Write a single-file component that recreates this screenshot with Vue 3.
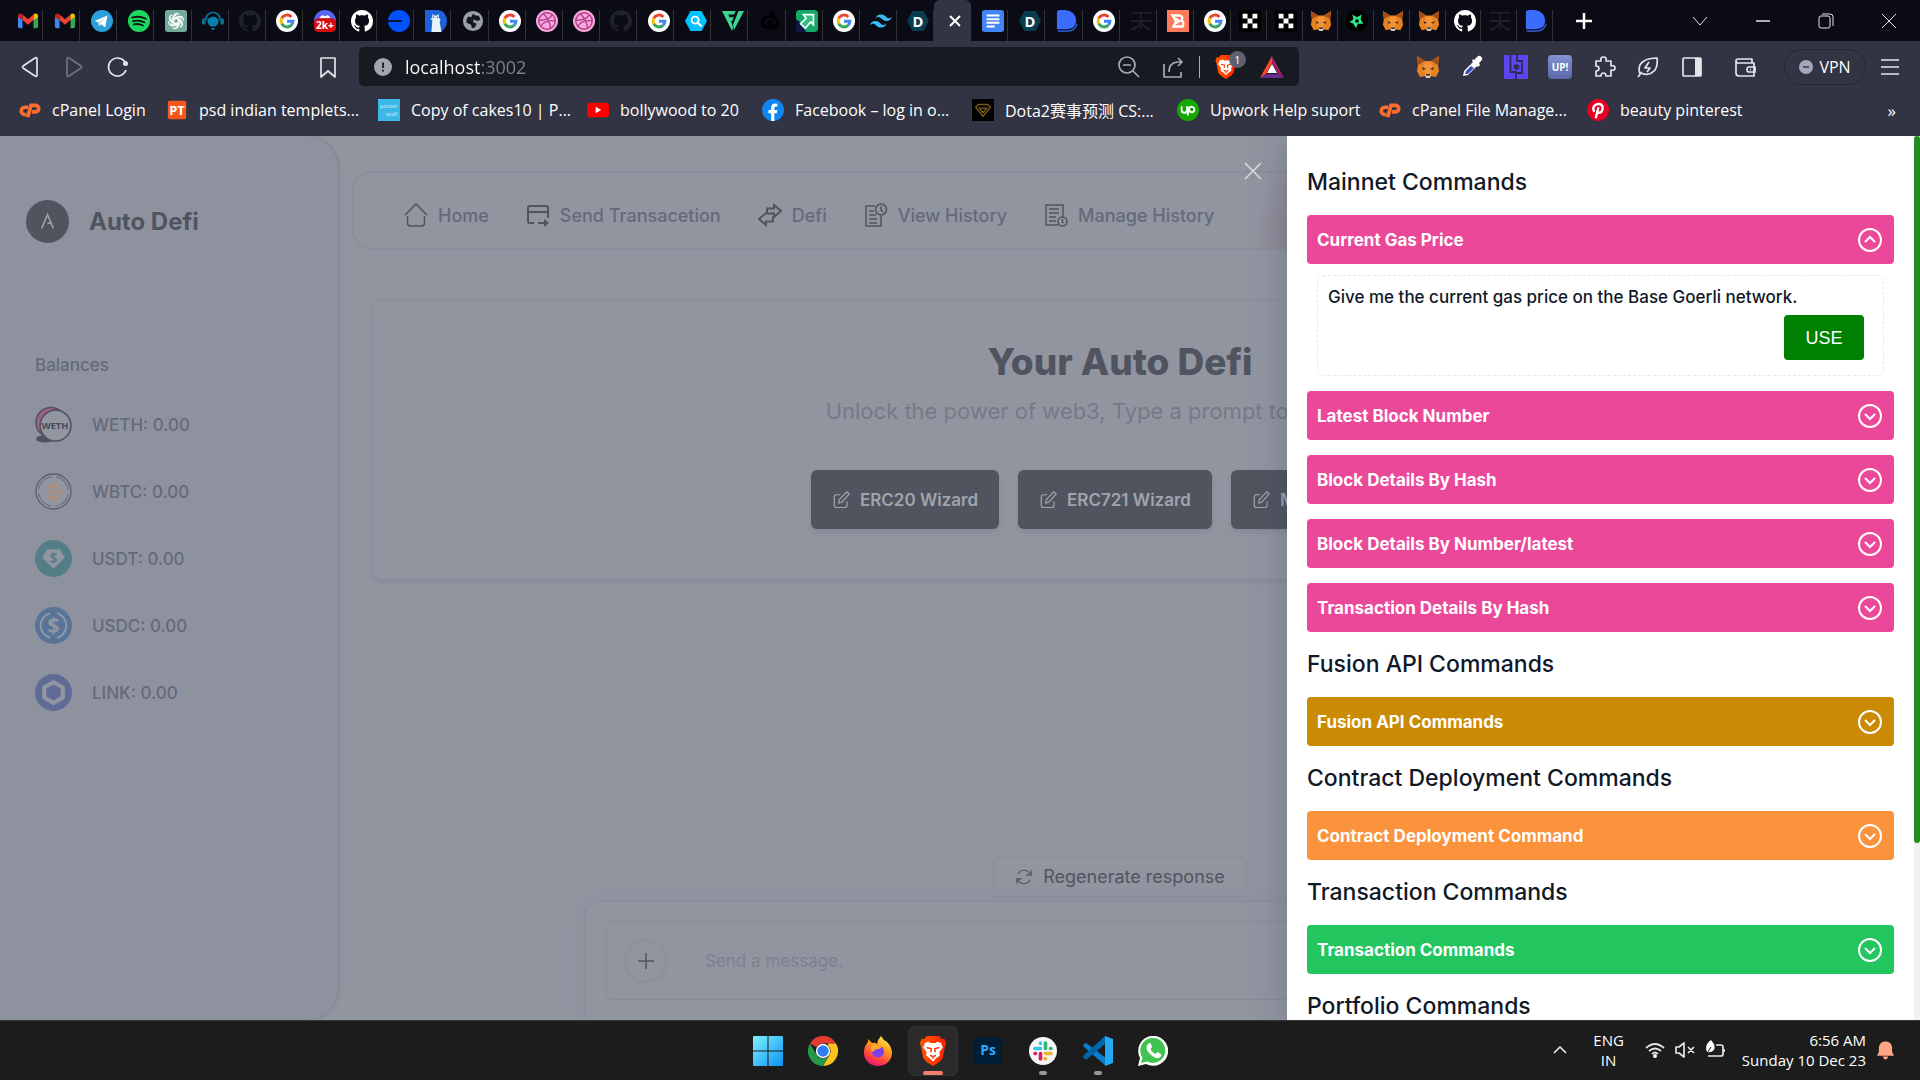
<template>
  <div class="screen">
    <!-- icon sheet, drawn through AppIcon -->
    <svg class="sheet" width="0" height="0" aria-hidden="true">
      <defs>
        <linearGradient id="g-win" x1="0" y1="0" x2="1" y2="1">
          <stop offset="0" stop-color="#80f0ff" />
          <stop offset="1" stop-color="#0a94f5" />
        </linearGradient>
        <linearGradient id="g-fire" x1="0.8" y1="0" x2="0.3" y2="1">
          <stop offset="0" stop-color="#fff44f" />
          <stop offset="0.4" stop-color="#ff9a1f" />
          <stop offset="0.8" stop-color="#ff3647" />
          <stop offset="1" stop-color="#e31587" />
        </linearGradient>
        <linearGradient id="g-brave" x1="0" y1="0" x2="1" y2="0">
          <stop offset="0" stop-color="#ff5601" />
          <stop offset="1" stop-color="#ff2000" />
        </linearGradient>
        <linearGradient id="g-up" x1="0" y1="0" x2="0" y2="1">
          <stop offset="0" stop-color="#8592d0" />
          <stop offset="1" stop-color="#5a68aa" />
        </linearGradient>
      </defs>
      <symbol id="i-gmail" viewBox="0 0 24 24">
        <path d="M1 7v11q0 2 2 2h3V9z" fill="#4285f4" />
        <path d="M23 7v11q0 2-2 2h-3V9z" fill="#34a853" />
        <path d="M6 11V5l6 5 6-5v6l-6 5z" fill="#ea4335" />
        <path d="M1 8V6.500Q1.500 3 5 4l1 1v6z" fill="#c5221f" />
        <path d="M23 8V6.500Q22.500 3 19 4l-1 1v6z" fill="#fbbc04" />
      </symbol>
      <symbol id="i-telegram" viewBox="0 0 24 24">
        <circle cx="12" cy="12" r="12" fill="#2ba0da" />
        <path d="M4 12l14-6-2.500 13-4.500-3.500-2.300 2.200-.500-4z" fill="#fff" />
        <path d="M8.200 13.700L15 8.800l-5 6-1.300 2.900z" fill="#b9d8ea" />
      </symbol>
      <symbol id="i-spotify" viewBox="0 0 24 24">
        <circle cx="12" cy="12" r="12" fill="#1ed760" />
        <path d="M4.500 8.300c5-1.500 10.500-1 15 1.300M5.500 12.200c4.500-1.200 8.500-.8 12.300 1.200M6.300 15.800c3.600-.9 7-.5 10 1.100" fill="none" stroke="#0b1510" stroke-width="2" stroke-linecap="round" />
      </symbol>
      <symbol id="i-openai" viewBox="0 0 24 24">
        <rect width="24" height="24" rx="3" fill="#74aa9c" />
        <g fill="none" stroke="#fff" stroke-width="1.300">
          <path id="petal" d="M9.500 13.500V7a3.300 3.300 0 0 1 6-1.800M9.500 9.500l4.500-2.600 4 2.300" />
          <use href="#petal" transform="rotate(60 12 12)" />
          <use href="#petal" transform="rotate(120 12 12)" />
          <use href="#petal" transform="rotate(180 12 12)" />
          <use href="#petal" transform="rotate(240 12 12)" />
          <use href="#petal" transform="rotate(300 12 12)" />
        </g>
      </symbol>
      <symbol id="i-headset" viewBox="0 0 24 24">
        <path d="M4 11a8 8.500 0 0 1 16 0" fill="none" stroke="#0a6f96" stroke-width="2" />
        <rect x="0" y="9" width="4" height="7" rx="2" fill="#0a6f96" />
        <rect x="20" y="9" width="4" height="7" rx="2" fill="#0a6f96" />
        <path d="M6 10q6-6 12 0v3q-1 4-4 5h-4q-3-1-4-5zM9.500 19.500h5L12 22z" fill="#0a7fab" />
      </symbol>
      <symbol id="i-github" viewBox="0 0 16 16">
        <path fill="currentColor" d="M8 0C3.580 0 0 3.580 0 8c0 3.540 2.290 6.530 5.470 7.590.4.07.55-.17.55-.38 0-.19-.01-.82-.01-1.490-2.010.37-2.530-.49-2.690-.94-.09-.23-.48-.94-.82-1.130-.28-.15-.68-.52-.01-.53.63-.01 1.080.58 1.230.82.72 1.210 1.870.87 2.330.66.07-.52.28-.87.51-1.070-1.780-.2-3.640-.89-3.640-3.950 0-.87.31-1.590.82-2.150-.08-.2-.36-1.020.08-2.120 0 0 .67-.21 2.200.82.64-.18 1.320-.27 2-.27s1.360.09 2 .27c1.530-1.040 2.200-.82 2.200-.82.44 1.100.16 1.920.08 2.120.51.56.82 1.270.82 2.150 0 3.070-1.870 3.750-3.650 3.950.29.25.54.73.54 1.480 0 1.070-.01 1.930-.01 2.200 0 .21.15.46.55.38A8.010 8.010 0 0 0 16 8c0-4.420-3.580-8-8-8z" />
      </symbol>
      <symbol id="i-google" viewBox="0 0 24 24">
        <circle cx="12" cy="12" r="12" fill="#fff" />
        <g fill="none" stroke-width="3.200">
          <path d="M6.300 9A6.500 6.500 0 0 1 16.800 7.600" stroke="#ea4335" />
          <path d="M6.300 15a6.500 6.500 0 0 1 0-6" stroke="#fbbc05" />
          <path d="M16.400 16.800A6.500 6.500 0 0 1 6.300 15" stroke="#34a853" />
          <path d="M12 12.200h6.500a6.500 6.500 0 0 1-2.100 4.600" stroke="#4285f4" />
        </g>
      </symbol>
      <symbol id="i-discord" viewBox="0 0 24 24">
        <circle cx="12" cy="12" r="12" fill="#5865f2" />
        <path d="M6 9q1-3 4-3.500l.5 1h3l.5-1q3 .5 4 3.500z" fill="#fff" />
        <rect y="9" width="24" height="15" rx="5" fill="#d90a0a" />
      </symbol>
      <symbol id="i-base" viewBox="0 0 24 24">
        <circle cx="12" cy="12" r="12" fill="#0052ff" />
        <path d="M0 12h15" stroke="#0b0b15" stroke-width="2" />
      </symbol>
      <symbol id="i-bear" viewBox="0 0 24 24">
        <path d="M0 0h14a10 12 0 0 1 0 24H0z" fill="#1c62d8" />
        <path d="M7 24l1-13-2-1 2-2V4l2 2h3l2-2v4l2 3-1 2 2 11z" fill="#e8f0fb" />
        <path d="M9 8h1M13 8h1" stroke="#1c3d70" stroke-width="1.500" />
      </symbol>
      <symbol id="i-globe" viewBox="0 0 24 24">
        <circle cx="12" cy="12" r="10" fill="#9aa0a6" />
        <path d="M12 4q3 3 6 2 2 3 2 5l-4 1-3-2-1 3 4 2-2 4-3 1q-1-3-1-4l-5-2q-1-4 2-7l3 1z" fill="#15161f" />
        <circle cx="12" cy="12" r="10" fill="none" stroke="#9aa0a6" stroke-width="2" />
      </symbol>
      <symbol id="i-dribbble" viewBox="0 0 24 24">
        <circle cx="12" cy="12" r="12" fill="#f9a8dd" />
        <g fill="none" stroke="#b2408a" stroke-width="1.500">
          <circle cx="12" cy="12" r="9" />
          <path d="M8 4q7 7 8 16M3 11q10 1 15-6M5 18q5-8 16-6" />
        </g>
      </symbol>
      <symbol id="i-hexsearch" viewBox="0 0 24 24">
        <path d="M6 1h12l6 11-6 11H6L0 12z" fill="#00c2ff" />
        <circle cx="11" cy="11" r="3.800" fill="none" stroke="#fff" stroke-width="2" />
        <path d="M14 14l4 4" stroke="#fff" stroke-width="2.200" />
      </symbol>
      <symbol id="i-flogo" viewBox="0 0 24 24">
        <path d="M0 1h15l-2 4H7l1 3h5l-2 4h-1l2 7-1 4zM18 1h6L13 22l-1-6z" fill="#3fd493" />
      </symbol>
      <symbol id="i-swirl" viewBox="0 0 24 24">
        <path d="M12 3q4 0 4 4M5 17a8 7 0 1 1 14 0q-7 5-14 0z" fill="none" stroke="#000" stroke-width="3.500" />
        <circle cx="12" cy="14" r="3" fill="#000" />
      </symbol>
      <symbol id="i-arrow" viewBox="0 0 24 24">
        <rect width="24" height="24" rx="4" fill="#16a866" />
        <path d="M0 10q8 4 11 14H4q-4 0-4-4z" fill="#10164a" />
        <path d="M8 5h11v11l-3-3-6 7-5-5 6-6z" fill="#2ec27e" stroke="#fff" stroke-width="1.800" />
      </symbol>
      <symbol id="i-tailwind" viewBox="0 0 24 24">
        <path fill="#38bdf8" d="M12 4.800c-3.200 0-5.200 1.600-6 4.800 1.200-1.600 2.600-2.200 4.200-1.800.9.200 1.600.9 2.300 1.600C13.700 10.600 15 12 18 12c3.200 0 5.200-1.600 6-4.800-1.200 1.600-2.600 2.200-4.200 1.800-.9-.2-1.600-.9-2.300-1.600C16.300 6.200 15 4.800 12 4.800zM6 12c-3.200 0-5.200 1.600-6 4.800 1.200-1.600 2.600-2.200 4.200-1.800.9.200 1.600.9 2.300 1.600 1.200 1.200 2.500 2.600 5.500 2.600 3.200 0 5.200-1.600 6-4.800-1.200 1.600-2.600 2.200-4.200 1.800-.9-.2-1.600-.9-2.300-1.600C10.300 13.400 9 12 6 12z" />
      </symbol>
      <symbol id="i-dhex" viewBox="0 0 24 24">
        <path d="M6 1h12l6 11-6 11H6L0 12z" fill="#063d50" />
      </symbol>
      <symbol id="i-docs" viewBox="0 0 24 24">
        <rect width="24" height="24" rx="3" fill="#4285f4" />
        <path d="M5 6h14M5 10h14M5 14h14M5 18h9" stroke="#fff" stroke-width="2.200" />
      </symbol>
      <symbol id="i-bluedee" viewBox="0 0 24 24">
        <path d="M1 3q0-3 3-3h6q11 1 12 11 0 10-10 10H1z" fill="#3a6cff" />
        <path d="M2 23h10q9 0 11-8" fill="none" stroke="#3a6cff" stroke-width="1.200" />
      </symbol>
      <symbol id="i-wang" viewBox="0 0 24 24">
        <path d="M1 3h22M1 12h22M12 3v18M3 20q8-1 9-8M21 20q-8-1-9-8M1 21h5M18 21h5" fill="none" stroke="#1d1e26" stroke-width="2" />
      </symbol>
      <symbol id="i-orangeb" viewBox="0 0 24 24">
        <rect width="24" height="24" fill="#ff7a5c" />
        <path d="M6 6h8q4 1 2 5 3 3 1 7H7l3-6z" fill="none" stroke="#fff" stroke-width="2.500" />
        <path d="M9 9l5 3-5 3" fill="none" stroke="#fff" stroke-width="2" />
      </symbol>
      <symbol id="i-okx" viewBox="0 0 24 24">
        <rect width="24" height="24" rx="4" fill="#000" />
        <path d="M4 4h5.300v5.300H4zM14.700 4H20v5.300h-5.300zM9.300 9.300h5.400v5.400H9.300zM4 14.700h5.300V20H4zM14.700 14.700H20V20h-5.300z" fill="#fff" />
      </symbol>
      <symbol id="i-fox" viewBox="0 0 24 24">
        <path d="M1 1l8 5h6l8-5-1 9 1 6-3 6-5-1-2 2h-2l-2-2-5 1-3-6 1-6z" fill="#e8821e" />
        <path d="M1 1l8 5-7 4zM23 1l-8 5 7 4z" fill="#a3501c" />
        <path d="M9 7h6l2 7-3 5h-4l-3-5z" fill="#f5933a" />
        <path d="M6 12l4 2-3 1zM18 12l-4 2 3 1z" fill="#3b2a20" />
        <path d="M9 20l1-1h4l1 1-1 3h-4z" fill="#d8c8b8" />
        <path d="M10 19h4v1.500h-4z" fill="#2a2220" />
      </symbol>
      <symbol id="i-spin" viewBox="0 0 24 24">
        <circle cx="12" cy="12" r="12" fill="#000" />
        <path d="M7 5l5 3 5-3-1 5 3 5-6 0-2 5-3-5-4-2 4-3z" fill="#2fe38a" />
        <circle cx="12" cy="12" r="2" fill="#000" />
      </symbol>
      <symbol id="i-brave" viewBox="0 0 24 26">
        <path d="M6.500 0h11l2 2.500 2.500 0 1.500 4-1 2-2 10.500-3 3.500L12 26l-5.500-3.500-3-3.500-2-10.500-1-2L2 2.500h2.500z" fill="url(#g-brave)" />
        <path d="M5 6l3-1 2 1h4l2-1 3 1 1.500 4-3 4 .5 3-3 2-3 3-3-3-3-2 .5-3-3-4z" fill="#fff" />
        <path d="M6.500 10l4 1-.5 3M17.500 10l-4 1 .5 3M9.500 16.500l2.500 1.500 2.500-1.500M12 18v2" fill="none" stroke="#ff3a00" stroke-width="1.300" />
      </symbol>
      <symbol id="i-cpanel" viewBox="0 0 24 24">
        <g fill="none" stroke="#ff6c2c" stroke-width="4">
          <path d="M10 9H6.500a3.500 3.500 0 0 0 0 8H8" />
          <path d="M9.500 20l3.500-13h5a3.500 3.500 0 0 1 0 7h-4" />
        </g>
      </symbol>
      <symbol id="i-pt" viewBox="0 0 24 24">
        <rect x="2" y="2" width="20" height="20" rx="2" fill="#f6571c" />
      </symbol>
      <symbol id="i-cakes" viewBox="0 0 24 24">
        <rect width="24" height="24" fill="#3cb8e6" />
      </symbol>
      <symbol id="i-youtube" viewBox="0 0 24 24">
        <rect y="4" width="24" height="16" rx="4" fill="#f00" />
        <path d="M9.500 8.500l6 3.500-6 3.500z" fill="#fff" />
      </symbol>
      <symbol id="i-facebook" viewBox="0 0 24 24">
        <circle cx="12" cy="12" r="12" fill="#1086f3" />
        <path d="M10 24v-8.500H7V12h3V9.500Q10 5 14.500 5l2.300.2v3h-1.500q-1.800 0-1.800 1.800v2h3.300l-.6 3.500h-2.700V24z" fill="#fff" />
      </symbol>
      <symbol id="i-dota" viewBox="0 0 24 24">
        <rect width="24" height="24" fill="#000" />
        <path d="M7 6h10l3 3-8 10L4 9zM8 10h8l-4 5z" fill="none" stroke="#7a5d1a" stroke-width="1.500" />
      </symbol>
      <symbol id="i-upwork" viewBox="0 0 24 24">
        <circle cx="12" cy="12" r="12" fill="#14a800" />
        <path d="M5 8v4a3 3 0 0 0 6 0V8q2 6 5 6.500a3 3 0 1 0-3-3.500L11.500 18" fill="none" stroke="#fff" stroke-width="2" />
      </symbol>
      <symbol id="i-pinterest" viewBox="0 0 24 24">
        <circle cx="12" cy="12" r="12" fill="#e60023" />
        <path d="M8 14q-2-3-.5-6 2-3 6-2.500 4 .8 3.500 5-.8 5-4 4.500-1.500-.3-1.500-1.500M12.500 9L9.500 21" fill="none" stroke="#fff" stroke-width="2.600" />
      </symbol>
      <symbol id="i-picker" viewBox="0 0 24 24">
        <path d="M3 21l1-5L14 6l4 4L8 20z" fill="#fff" />
        <path d="M5 19l1-3 5-5 3 2-6 6z" fill="#3450b8" />
        <path d="M12 6l6 6 2-2-1-2 3-3q1-2-1-3.500T17 2l-3 3-1-1z" fill="#fff" />
      </symbol>
      <symbol id="i-blocks" viewBox="0 0 24 24">
        <path d="M0 0h24v24H0z" fill="#5b46f2" />
        <path d="M6.500 0v17H12v7M13 0v6h5v12h-5" fill="none" stroke="#2b2d55" stroke-width="1.800" />
        <circle cx="12.500" cy="12" r="2.800" fill="#2b2d55" />
      </symbol>
      <symbol id="i-up" viewBox="0 0 24 24">
        <rect width="24" height="24" rx="4" fill="url(#g-up)" />
      </symbol>
      <symbol id="i-puzzle" viewBox="0 0 24 24">
        <path d="M4 6h5q-1-4 2.500-4T14 6h5v5q4-1 4 2t-4 2v6h-5q0-3-2.500-3T9 21H4v-5q3 0 3-2.500T4 11z" class="line" />
      </symbol>
      <symbol id="i-leaf" viewBox="0 0 24 24">
        <path d="M4 19q-3-9 4-13 5-3 13-3 1 9-3 13-5 5-12 2.500M2 22l4-5M13 7l-4 6h5l-3 4" class="line" />
      </symbol>
      <symbol id="i-panel" viewBox="0 0 24 24">
        <rect x="3" y="3" width="18" height="18" rx="1" class="line" />
        <path d="M15 3h6v18h-6z" fill="#e4e5ea" />
      </symbol>
      <symbol id="i-wallet" viewBox="0 0 24 24">
        <path d="M3 6v12q0 3 3 3h15V8H5Q3 8 3 6t2-2h14v4M22 12h-6q-2 0-2 2.500t2 2.500h6zM17 14.500h1" class="line" />
      </symbol>
      <symbol id="i-weth" viewBox="0 0 36 36">
        <ellipse cx="10" cy="32" rx="9" ry="3.500" fill="#50535f" />
        <circle cx="15.500" cy="16" r="14.500" fill="#a25f8c" stroke="#50535f" stroke-width="1.500" />
        <circle cx="20" cy="19" r="15" fill="#9296a1" stroke="#50535f" stroke-width="1.500" />
      </symbol>
      <symbol id="i-wbtc" viewBox="0 0 36 36">
        <circle cx="18" cy="18" r="17" fill="#9296a1" stroke="#5d5b72" stroke-width="1.300" />
        <circle cx="18" cy="18" r="14.500" fill="none" stroke="#6d6c80" stroke-width="1" stroke-dasharray="19 3.770" stroke-dashoffset="-1.900" />
        <path d="M12 13h8q3.500 0 3.500 2.500T20 18h-4.500M20 18q4.500 0 4.500 2.800T20 23.600h-8M15.500 13v10.600M16.500 9v4M20.500 9v4M16.500 23.600v4M20.500 23.600v4" fill="none" stroke="#b08f7d" stroke-width="1.900" />
      </symbol>
      <symbol id="i-usdt" viewBox="0 0 36 36">
        <circle cx="18" cy="18" r="18" fill="#537e86" />
        <path d="M12 9h12l5 8-11 11L7 17z" fill="#9296a1" />
      </symbol>
      <symbol id="i-usdc" viewBox="0 0 36 36">
        <circle cx="18" cy="18" r="18" fill="#587499" />
        <path d="M14.500 6a12.500 12.500 0 0 0 0 24M21.500 6a12.500 12.500 0 0 1 0 24" fill="none" stroke="#9296a1" stroke-width="2" />
      </symbol>
      <symbol id="i-link" viewBox="0 0 36 36">
        <circle cx="18" cy="18" r="18" fill="#5f6b97" />
        <path d="M18 8l9 5v10l-9 5-9-5V13z" fill="none" stroke="#9296a1" stroke-width="4" />
      </symbol>
      <symbol id="i-home" viewBox="0 0 24 24">
        <path d="M1 12L12 1l11 11M3.500 13v7q0 3 3 3h11q3 0 3-3v-7" class="mono" />
      </symbol>
      <symbol id="i-send" viewBox="0 0 24 24">
        <path d="M8 20H4q-2 0-2-2V5q0-2 2-2h16q2 0 2 2v10M2 9h20M12 20h8" class="mono bold" />
        <path d="M18 16l5 4-5 4z" fill="#50545f" />
      </symbol>
      <symbol id="i-swap" viewBox="0 0 24 24">
        <path d="M16 2l7 6-7 6v-3.500H9v-5h7zM8 10l-7 6 7 6v-3.500h7v-5" class="mono bold" />
      </symbol>
      <symbol id="i-view" viewBox="0 0 24 24">
        <path d="M11 3H2v20h15V13M5 8h5M5 12h7M5 16h8M5 20h8" class="mono" />
        <circle cx="17" cy="6.500" r="5.500" class="mono" />
        <path d="M17 3v4l2 2" class="mono" />
      </symbol>
      <symbol id="i-manage" viewBox="0 0 24 24">
        <path d="M14 22H2V2h17v12M5 6h10M5 10h10M5 14h7M5 18h7" class="mono" />
        <circle cx="18.500" cy="18.500" r="4.500" class="mono" />
        <path d="M18.500 16v3l1 1" class="mono" />
      </symbol>
      <symbol id="i-edit" viewBox="0 0 24 24">
        <path d="M11 5H6q-3 0-3 3v11q0 3 3 3h11q3 0 3-3v-5M9 16l1-5L20 1l3 3-10 11z" fill="none" stroke="#a0a4ae" stroke-width="1.600" />
      </symbol>
      <symbol id="i-refresh" viewBox="0 0 24 24">
        <path d="M4 8q3-5 8-5 6 0 9 6M21.500 3v6.500H15M20 16q-3 5-8 5-6 0-9-6M2.500 21v-6.500H9" class="mono" />
      </symbol>
      <symbol id="i-windows" viewBox="0 0 30 30">
        <path d="M0 1q0-1 1-1h13.500v14.500H0zM15.500 0H29q1 0 1 1v13.500H15.500zM0 15.500h14.500V30H1q-1 0-1-1zM15.500 15.500H30V29q0 1-1 1H15.500z" fill="url(#g-win)" />
      </symbol>
      <symbol id="i-chrome" viewBox="0 0 30 30">
        <path d="M2 7.500a15 15 0 0 1 26 0H15a7.500 7.500 0 0 0-6.500 3.800z" fill="#e33b2e" />
        <path d="M28 7.500A15 15 0 0 1 15 30l6.500-11.300A7.500 7.500 0 0 0 20 9.500V7.500z" fill="#fcc31e" />
        <path d="M2 7.500A15 15 0 0 0 15 30l6.500-11.300a7.500 7.500 0 0 1-13 0z" fill="#249a49" />
        <circle cx="15" cy="15" r="7.200" fill="#fff" />
        <circle cx="15" cy="15" r="5.700" fill="#2f7df0" />
      </symbol>
      <symbol id="i-firefox" viewBox="0 0 30 30">
        <path d="M18 0q2 4 6 6 5 5 5 11a14 13 0 0 1-28 0Q1 10 5 6V3l4 4q3-1 5 1 1-5 4-8z" fill="url(#g-fire)" />
        <circle cx="15" cy="15.500" r="6" fill="#7a3ff0" />
        <path d="M8 9q3-2 6 0l5 1q-1 3-4 3t-5 3q-3-1-2-7z" fill="#ffa52a" />
      </symbol>
      <symbol id="i-ps" viewBox="0 0 30 30">
        <rect x="1" y="1" width="28" height="27" rx="5" fill="#001e36" />
      </symbol>
      <symbol id="i-slack" viewBox="0 0 30 30">
        <circle cx="15" cy="15" r="14" fill="#f7f7f7" />
        <g fill="none" stroke-width="3.600" stroke-linecap="round">
          <path d="M7 12.500h5.500M12.500 7v.5" stroke="#36c5f0" />
          <path d="M17.500 7v5.500M22.500 12.500h.5" stroke="#2eb67d" />
          <path d="M17.500 17.500H23M17.500 22.500v.5" stroke="#ecb22e" />
          <path d="M12.500 17.500V23M7 17.500h.5" stroke="#e01e5a" />
        </g>
      </symbol>
      <symbol id="i-code" viewBox="0 0 30 30">
        <path d="M0 9l3-2 20 15v8L1 11z" fill="#0a7fd0" />
        <path d="M0 21l3 3L22 8V0L1 19z" fill="#0065a9" />
        <path d="M22 0l8 3v24l-8 3z" fill="#24a9f2" />
      </symbol>
      <symbol id="i-whatsapp" viewBox="0 0 30 30">
        <path d="M0 30l2-8A15 15 0 1 1 8 28z" fill="#fff" />
        <path d="M3 27l1.500-5.500A12.500 12.500 0 1 1 9 25.500z" fill="#40c351" />
        <path d="M10 8q2-2 3 0l1 3-1.500 2q1 3 5 5l2-2 3.500 2q1 2-2 4-4 1-9-4-6-6-2-10z" fill="#fff" />
      </symbol>
    </svg>

    <header class="browser">
      <div class="tabstrip">
        <div class="tabs">
          <button v-for="(tab, i) in tabs" :key="i" class="tab" :class="{ active: tab === 'close', dim: tab === 'dim' }" :aria-label="tab">
            <svg v-if="tab === 'close'" viewBox="0 0 22 22"><path d="M6 6l10 10M16 6L6 16" stroke="#fff" stroke-width="2" /></svg>
            <AppIcon v-else :name="tab === 'dim' ? 'github' : tab" />
          </button>
        </div>
        <div class="window-controls">
          <button aria-label="New tab"><svg viewBox="0 0 24 24"><path d="M12 4v16M4 12h16" stroke="#fff" stroke-width="2.500" /></svg></button>
          <button aria-label="Search tabs"><svg viewBox="0 0 24 24"><path d="M5 8l7 8 7-8" /></svg></button>
          <button aria-label="Minimize"><svg viewBox="0 0 24 24"><path d="M5 12h14" stroke-width="1.500" /></svg></button>
          <button aria-label="Restore"><svg viewBox="0 0 24 24"><rect x="5" y="7" width="11" height="12" rx="2" /><path d="M8 5h8q3 0 3 3v9" /></svg></button>
          <button aria-label="Close window"><svg viewBox="0 0 24 24"><path d="M5 5l14 14M19 5L5 19" /></svg></button>
        </div>
      </div>

      <div class="toolbar">
        <div class="nav-buttons">
          <button aria-label="Back"><svg viewBox="0 0 24 24"><path d="M19 4v16q0 2-2 1L5 13q-1-1 0-2L17 3q2-1 2 1z" class="line" /></svg></button>
          <button class="faded" aria-label="Forward"><svg viewBox="0 0 24 24"><path d="M5 4v16q0 2 2 1l12-8q1-1 0-2L7 3Q5 2 5 4z" class="line" /></svg></button>
          <button aria-label="Reload"><svg viewBox="0 0 24 24"><path d="M20 15a9 9 0 1 1-1-8" class="line" /><circle cx="19.500" cy="8.500" r="2.500" fill="#e4e5ea" /></svg></button>
        </div>
        <button class="save" aria-label="Bookmark this page"><svg viewBox="0 0 24 24"><path d="M5 3h14v19l-7-6-7 6z" class="line" /></svg></button>
        <div class="address">
          <svg viewBox="0 0 20 20"><circle cx="10" cy="10" r="10" fill="#a2a4ae" /><path d="M10 5v6M10 13v2" stroke="#181a21" stroke-width="2" /></svg>
          <input v-model="url" type="text" aria-label="Address" />
          <button aria-label="Zoom"><svg viewBox="0 0 24 24"><g class="line soft"><circle cx="10" cy="10" r="8" /><path d="M6 10h8M16 16l6 6" /></g></svg></button>
          <button aria-label="Share"><svg viewBox="0 0 24 24"><path d="M3 9v13h17v-5M8 17q0-9 8-10h5M17 3l4 4-4 4" class="line soft" /></svg></button>
          <span class="divider"></span>
          <button class="shield" aria-label="Brave Shields"><AppIcon name="brave" /><span class="count">1</span></button>
          <button aria-label="Rewards">
            <svg viewBox="0 0 24 24"><path d="M12 1L0 23l6-4 6-11z" fill="#ff4724" /><path d="M12 1l12 22-6-4-6-11z" fill="#9e1f63" /><path d="M0 23h24l-6-4H6z" fill="#662d91" /><path d="M12 9l5 9H7z" fill="#fff" /></svg>
          </button>
        </div>
        <div class="extensions">
          <button v-for="name in extensions" :key="name" :aria-label="name"><AppIcon :name="name" /></button>
        </div>
        <button class="wallet" aria-label="Wallet"><AppIcon name="wallet" /></button>
        <button class="vpn">
          <svg viewBox="0 0 14 14"><circle cx="7" cy="7" r="7" fill="#a4a6bb" /><path d="M4 7h6" stroke="#323443" stroke-width="1.500" /></svg>VPN
        </button>
        <button class="menu" aria-label="Menu"><svg viewBox="0 0 24 24"><path d="M3 5h18M3 12h18M3 19h18" class="line" /></svg></button>
      </div>

      <nav class="bookmarks">
        <a v-for="b in bookmarks" :key="b.text" href="#"><AppIcon :name="b.icon" />{{ b.text }}</a>
        <button class="more" aria-label="More bookmarks">»</button>
      </nav>
    </header>

    <div class="page">
      <aside class="sidebar">
        <div class="brand">
          <svg viewBox="0 0 44 44"><circle cx="22" cy="22" r="22" fill="#50545f" /><path d="M16 29l6-14 6 14M22 24l4-1" fill="none" stroke="#a0a4ae" stroke-width="1.500" /></svg>
          <h1>Auto Defi</h1>
        </div>
        <h2>Balances</h2>
        <ul>
          <li v-for="t in tokens" :key="t"><AppIcon :name="t.toLowerCase()" />{{ t }}: 0.00</li>
        </ul>
      </aside>

      <main class="content">
        <nav class="topnav">
          <a v-for="l in links" :key="l.text" href="#"><AppIcon :name="l.icon" />{{ l.text }}</a>
        </nav>

        <section class="hero">
          <h2>Your Auto Defi</h2>
          <p>Unlock the power of web3, Type a prompt to get started!</p>
          <div class="wizards">
            <button v-for="w in wizards" :key="w"><AppIcon name="edit" />{{ w }}</button>
          </div>
        </section>

        <button class="regenerate"><AppIcon name="refresh" />Regenerate response</button>
        <form class="composer" @submit.prevent>
          <div class="composer-box">
            <button type="button" aria-label="Add"><svg viewBox="0 0 16 16"><path d="M8 0v16M0 8h16" stroke="#50545f" stroke-width="1.500" /></svg></button>
            <input v-model="message" type="text" placeholder="Send a message." aria-label="Message" />
          </div>
        </form>
      </main>

      <button class="close-drawer" aria-label="Close drawer"><svg viewBox="0 0 18 18"><path d="M1 1l16 16M17 1L1 17" stroke="#dcdee3" stroke-width="1.500" /></svg></button>
      <aside class="drawer">
        <section v-for="g in groups" :key="g.title">
          <h3>{{ g.title }}</h3>
          <template v-for="c in g.commands" :key="c.name">
            <button class="bar" :class="g.color" @click="toggle(c.name)">
              {{ c.name }}
              <svg viewBox="0 0 24 24">
                <circle cx="12" cy="12" r="11" />
                <path :d="open === c.name ? 'M7 14l5-5 5 5' : 'M7 10l5 5 5-5'" />
              </svg>
            </button>
            <div v-if="open === c.name" class="prompt">
              <p>{{ c.prompt }}</p>
              <button @click="message = c.prompt">USE</button>
            </div>
          </template>
        </section>
        <div class="scroll"><div class="thumb"></div></div>
      </aside>
    </div>

    <footer class="taskbar">
      <div class="apps">
        <button v-for="a in apps" :key="a" :class="['app', a]" :aria-label="a"><AppIcon :name="a" /></button>
      </div>
      <div class="tray">
        <button aria-label="Hidden icons"><svg viewBox="0 0 16 16"><path d="M2 11l6-6 6 6" class="line" /></svg></button>
        <div class="lang">ENG<br />IN</div>
        <div class="status">
          <svg viewBox="0 0 20 20"><g class="line"><path d="M1 8q9-8 18 0M4 11q6-5 12 0M7 14q3-3 6 0" /></g><circle cx="10" cy="16" r="2" fill="#fff" /></svg>
          <svg viewBox="0 0 20 20"><path d="M1 7h3l5-4v14l-5-4H1zM13 7l6 6M19 7l-6 6" class="line" /></svg>
          <svg viewBox="0 0 20 20"><path d="M11 5h5q2 0 2 2v7q0 2-2 2H3M19 9v3" class="line" /><path d="M6 0q5 5 3 10-3 3-7 2Q-1 5 6 0z" fill="#fff" /><path d="M1 15l5-8" stroke="#1c1c1c" /></svg>
        </div>
        <div class="clock">6:56 AM<br />Sunday 10 Dec 23</div>
        <svg class="bell" viewBox="0 0 18 20"><path d="M0 16l2-4V7q1-6 7-6t7 6v5l2 4zM6 17h6q-1 3-3 3t-3-3z" fill="#ffa582" /></svg>
      </div>
    </footer>
  </div>
</template>

<script setup>
import { h, ref } from "vue";

const url = ref("localhost:3002");
const message = ref("");
const open = ref("Current Gas Price");

// lettering that sits on top of some icons, in a 24x24 box
const lettering = {
  discord: [{ text: "2k+", x: 12, y: 21, size: 11, fill: "#fff" }],
  dhex: [{ text: "D", x: 12, y: 18, size: 16, fill: "#fff" }],
  pt: [{ text: "PT", x: 12, y: 17, size: 14, fill: "#fff" }],
  cakes: [
    { text: "poster", x: 12, y: 10, size: 6, fill: "#a4def5" },
    { text: "wall", x: 15, y: 18, size: 6, fill: "#a4def5" },
  ],
  up: [{ text: "UP!", x: 12, y: 16, size: 10, fill: "#fff" }],
  weth: [{ text: "WETH", x: 13, y: 15, size: 6, fill: "#454853" }],
  usdt: [{ text: "$", x: 12, y: 15, size: 9, fill: "#537e86" }],
  usdc: [{ text: "$", x: 12, y: 17, size: 14, fill: "#9296a1" }],
  ps: [{ text: "Ps", x: 12, y: 15, size: 11, fill: "#31a8ff" }],
};

const AppIcon = (props) =>
  h("svg", { viewBox: "0 0 24 24", "aria-hidden": "true" }, [
    h("use", { href: "#i-" + props.name }),
    ...(lettering[props.name] || []).map((l) =>
      h(
        "text",
        { x: l.x, y: l.y, fill: l.fill, "font-size": l.size, "font-family": "Open Sans", "font-weight": 700, "text-anchor": "middle" },
        l.text
      )
    ),
  ]);
AppIcon.props = ["name"];

// "close" is the active tab, "dim" is a github tab with the dark favicon
const tabs = [
  "gmail", "gmail", "telegram", "spotify", "openai", "headset", "dim", "google", "discord", "github", "base",
  "bear", "globe", "google", "dribbble", "dribbble", "dim", "google", "hexsearch", "flogo", "swirl", "arrow",
  "google", "tailwind", "dhex", "close", "docs", "dhex", "bluedee", "google", "wang", "orangeb", "google",
  "okx", "okx", "fox", "spin", "fox", "fox", "github", "wang", "bluedee",
];

const extensions = ["fox", "picker", "blocks", "up", "puzzle", "leaf", "panel"];

const bookmarks = [
  { icon: "cpanel", text: "cPanel Login" },
  { icon: "pt", text: "psd indian templets..." },
  { icon: "cakes", text: "Copy of cakes10 | P..." },
  { icon: "youtube", text: "bollywood to 20" },
  { icon: "facebook", text: "Facebook – log in o..." },
  { icon: "dota", text: "Dota2赛事预测 CS:..." },
  { icon: "upwork", text: "Upwork Help suport" },
  { icon: "cpanel", text: "cPanel File Manage..." },
  { icon: "pinterest", text: "beauty pinterest" },
];

const tokens = ["WETH", "WBTC", "USDT", "USDC", "LINK"];

const links = [
  { icon: "home", text: "Home" },
  { icon: "send", text: "Send Transacetion" },
  { icon: "swap", text: "Defi" },
  { icon: "view", text: "View History" },
  { icon: "manage", text: "Manage History" },
];

const wizards = ["ERC20 Wizard", "ERC721 Wizard", "Multisig Wizard"];

const groups = [
  {
    title: "Mainnet Commands",
    color: "pink",
    commands: [
      { name: "Current Gas Price", prompt: "Give me the current gas price on the Base Goerli network." },
      { name: "Latest Block Number", prompt: "Give me the latest block number." },
      { name: "Block Details By Hash", prompt: "Give me the block details by hash." },
      { name: "Block Details By Number/latest", prompt: "Give me the details of the latest block." },
      { name: "Transaction Details By Hash", prompt: "Give me the transaction details by hash." },
    ],
  },
  { title: "Fusion API Commands", color: "gold", commands: [{ name: "Fusion API Commands", prompt: "" }] },
  { title: "Contract Deployment Commands", color: "orange", commands: [{ name: "Contract Deployment Command", prompt: "" }] },
  { title: "Transaction Commands", color: "green", commands: [{ name: "Transaction Commands", prompt: "" }] },
  { title: "Portfolio Commands", color: "pink", commands: [] },
];

const apps = ["windows", "chrome", "firefox", "brave", "ps", "slack", "code", "whatsapp"];

function toggle(name) {
  open.value = open.value === name ? "" : name;
}
</script>

<style>
body {
  background: #9195a0;
}
</style>

<style scoped>
* {
  box-sizing: border-box;
}
.screen {
  display: flex;
  flex-direction: column;
  height: 100vh;
  overflow: hidden;
  font-family: "Inter", "Liberation Sans", sans-serif;
}
.sheet {
  position: absolute;
}
h1,
h2,
h3,
p,
ul {
  margin: 0;
  padding: 0;
}
a {
  color: inherit;
  text-decoration: none;
}
button,
input {
  border: 0;
  padding: 0;
  background: none;
  color: inherit;
  font: inherit;
}
button {
  cursor: pointer;
}
svg {
  display: block;
  flex: none;
}
.line {
  fill: none;
  stroke: #e4e5ea;
  stroke-width: 1.700;
  stroke-linejoin: round;
}
.soft {
  stroke: #a9abb3;
}
.mono {
  fill: none;
  stroke: #50545f;
  stroke-width: 1.500;
}
.bold {
  stroke-width: 2;
}

/* browser chrome */
.browser {
  flex: none;
  height: 136px;
  background: #323443;
  color: #fff;
  font-family: "Open Sans", "Noto Sans CJK SC", sans-serif;
}
.tabstrip {
  display: flex;
  height: 41px;
  padding-left: 6px;
  background: #0b0b15;
}
.tabs {
  flex: 1;
  display: grid;
  grid-template-columns: repeat(33, 83fr) repeat(9, 80fr);
}
.tab {
  display: flex;
  align-items: center;
  justify-content: center;
  min-width: 0;
  padding-left: 6px;
  background: linear-gradient(#333, #333) right bottom / 1px 31px no-repeat;
}
.tab:nth-child(n + 34) {
  padding-left: 2px;
}
.tab svg {
  width: 22px;
  height: 22px;
}
.tab.dim {
  color: #1f2229;
}
.tab.active {
  padding: 0 0 0 4px;
  background: #323443;
  border-radius: 6px 6px 0 0;
}
.window-controls {
  display: grid;
  grid-template-columns: 115px 63px 63px 63px 63px;
  width: 367px;
}
.window-controls button {
  display: grid;
  place-items: center;
}
.window-controls button:first-child {
  padding-right: 53px;
}
.window-controls svg {
  width: 24px;
  height: 24px;
  fill: none;
  stroke: #e4e5ea;
}
.toolbar {
  display: flex;
  align-items: center;
  height: 51px;
  padding: 0 18px;
}
.toolbar svg {
  width: 24px;
  height: 24px;
}
.nav-buttons {
  flex: 1;
  display: flex;
  gap: 20px;
}
.faded {
  opacity: 0.35;
}
.save {
  margin-right: 19px;
}
.address {
  display: flex;
  align-items: center;
  gap: 20px;
  width: 940px;
  height: 39px;
  padding: 0 15px;
  background: #181a21;
  border-radius: 5px;
}
.address > svg {
  width: 18px;
  height: 18px;
}
.address input {
  flex: 1;
  margin-left: -7px;
  font-size: 18px;
  background: linear-gradient(90deg, #fff 76px, #80838c 76px);
  background-clip: text;
  color: transparent;
}
.divider {
  width: 1px;
  height: 22px;
  margin: 0 -6px;
  background: #a9abb3;
}
.shield {
  position: relative;
  margin-right: 2px;
}
.count {
  position: absolute;
  top: -4px;
  left: 15px;
  width: 17px;
  height: 17px;
  border-radius: 50%;
  background: #5d6070;
  font-size: 11px;
  line-height: 17px;
}
.extensions {
  display: flex;
  gap: 20px;
  margin-left: 117px;
}
.wallet {
  margin-left: 29px;
}
.vpn {
  display: flex;
  align-items: center;
  justify-content: center;
  gap: 6px;
  width: 82px;
  height: 36px;
  margin-left: 27px;
  border: 1px solid #242630;
  border-radius: 18px;
  font-size: 16px;
}
.vpn svg {
  width: 14px;
  height: 14px;
}
.menu {
  margin-left: 12px;
}
.bookmarks {
  display: grid;
  grid-template-columns: 147px 212px 209px 175px 210px 205px 202px 208px 1fr auto;
  align-items: center;
  height: 36px;
  padding: 0 24px 0 19px;
  font-size: 16px;
}
.bookmarks a {
  display: flex;
  align-items: center;
  gap: 11px;
  white-space: nowrap;
}
.bookmarks svg {
  width: 22px;
  height: 22px;
}
.more {
  font-size: 17px;
}

/* page under the drawer mask */
.page {
  position: relative;
  flex: 1;
  display: flex;
  min-height: 0;
  overflow: hidden;
  background: #9195a0;
  color: #646a7a;
}
.sidebar {
  width: 338px;
  padding: 64px 26px 0;
  background: #8e929e;
  border-radius: 0 32px 32px 0;
  box-shadow: 1px 0 3px #7e828e;
}
.brand {
  display: flex;
  align-items: center;
  gap: 20px;
  color: #50545f;
}
.brand svg {
  width: 43px;
  height: 43px;
}
.brand h1 {
  font-size: 24px;
  font-weight: 700;
  line-height: 30px;
}
.sidebar h2 {
  margin: 110px 9px 29px;
  font-size: 17px;
  font-weight: 500;
  line-height: 24px;
}
.sidebar ul {
  display: grid;
  gap: 30px;
  margin-left: 9px;
  list-style: none;
}
.sidebar li {
  display: flex;
  align-items: center;
  gap: 20px;
  font-size: 17px;
  font-weight: 500;
}
.sidebar li svg {
  width: 37px;
  height: 37px;
}
.content {
  flex: 1;
  display: flex;
  flex-direction: column;
  min-width: 0;
  padding: 35px 32px 0 14px;
}
.topnav {
  display: flex;
  align-items: center;
  gap: 37px;
  height: 79px;
  padding: 9px 50px 0;
  border: 2px solid #8b8f9b;
  border-radius: 20px;
  background: radial-gradient(circle at 1060px 80px, #8d7789 90px, transparent 160px);
}
.topnav a {
  display: flex;
  align-items: center;
  gap: 10px;
  font-size: 18px;
  font-weight: 500;
  white-space: nowrap;
}
.topnav svg {
  width: 24px;
  height: 24px;
}
.hero {
  display: flex;
  flex-direction: column;
  align-items: center;
  height: 281px;
  margin: 49px 20px 0;
  padding-top: 40px;
  border: 1px solid #898d99;
  border-radius: 10px;
  box-shadow: 0 3px 4px #888c98;
}
.hero h2 {
  color: #50545f;
  font-size: 37px;
  font-weight: 800;
  line-height: 44px;
}
.hero p {
  margin-top: 11px;
  color: #757a87;
  font-size: 22px;
  font-weight: 400;
  line-height: 32px;
}
.wizards {
  display: flex;
  gap: 19px;
  margin-top: 43px;
}
.wizards button {
  display: flex;
  align-items: center;
  gap: 10px;
  height: 59px;
  padding: 0 21px;
  border-radius: 6px;
  background: #50545f;
  box-shadow: 0 3px 5px #858995;
  color: #a0a4ae;
  font-size: 17px;
  font-weight: 600;
}
.wizards svg {
  width: 18px;
  height: 18px;
}
.regenerate {
  display: flex;
  align-items: center;
  align-self: center;
  gap: 10px;
  height: 41px;
  margin-top: auto;
  margin-bottom: 4px;
  padding: 0 20px;
  border: 1px solid #8b8f9b;
  border-radius: 8px;
  box-shadow: 0 2px 3px #8b8f9b;
  color: #50545f;
  font-size: 18px;
}
.regenerate svg {
  width: 18px;
  height: 18px;
}
.composer {
  align-self: center;
  width: 100%;
  max-width: 1070px;
  padding: 19px 20px 20px;
  border: 1px solid #898d99;
  border-bottom: 0;
  border-radius: 14px 14px 0 0;
  box-shadow: 0 0 14px #8b8f9b;
}
.composer-box {
  display: flex;
  align-items: center;
  gap: 39px;
  height: 79px;
  padding: 0 19px;
  border: 1px solid #898d99;
  border-radius: 6px;
}
.composer-box button {
  display: grid;
  place-items: center;
  width: 40px;
  height: 40px;
  border-radius: 50%;
  box-shadow: 0 0 3px #7f838f;
}
.composer-box svg {
  width: 16px;
  height: 16px;
}
.composer-box input {
  flex: 1;
  font-size: 17px;
}
.composer-box input::placeholder {
  color: #7b808e;
}

/* drawer */
.close-drawer {
  position: absolute;
  top: 26px;
  right: 658px;
}
.close-drawer svg {
  width: 18px;
  height: 18px;
}
.drawer {
  position: absolute;
  top: 0;
  right: 0;
  bottom: 0;
  width: 633px;
  padding: 29px 26px 0 20px;
  overflow: hidden;
  background: #fff;
  box-shadow: -6px 0 30px rgba(60, 66, 85, 0.25);
  color: #111827;
}
.drawer h3 {
  margin-bottom: 15px;
  font-size: 23px;
  font-weight: 500;
  line-height: 35px;
}
.bar {
  display: flex;
  align-items: center;
  justify-content: space-between;
  width: 100%;
  height: 49px;
  margin-bottom: 15px;
  padding: 0 12px 0 10px;
  border-radius: 4px;
  color: #fff;
  font-size: 17px;
  font-weight: 700;
}
.bar svg {
  width: 24px;
  height: 24px;
  fill: none;
  stroke: #fff;
  stroke-width: 2;
}
.pink {
  background: #ec4899;
}
.gold {
  background: #ca8a04;
}
.orange {
  background: #fb923c;
}
.green {
  background: #22c55e;
}
.prompt {
  display: flex;
  flex-direction: column;
  height: 101px;
  margin: -4px 10px 15px;
  padding: 8px 19px 0 10px;
  border: 1px dashed #e5e7eb;
  border-radius: 6px;
  font-size: 17px;
  font-weight: 500;
  line-height: 26px;
}
.prompt button {
  align-self: flex-end;
  width: 80px;
  height: 45px;
  margin-top: 5px;
  border-radius: 4px;
  background: #008000;
  color: #fff;
  font-family: "Liberation Sans", sans-serif;
  font-size: 18px;
  font-weight: 400;
}
.scroll {
  position: absolute;
  top: 0;
  right: 0;
  bottom: 0;
  width: 6px;
  background: #f1f1f1;
}
.thumb {
  height: 80%;
  border-radius: 3px;
  background: #228b22;
}

/* taskbar */
.taskbar {
  flex: none;
  display: grid;
  grid-template-columns: 1fr auto 1fr;
  height: 60px;
  border-top: 1px solid #3a3a3a;
  background: #1c1c1c;
  color: #fff;
  font-family: "Open Sans", sans-serif;
}
.apps {
  grid-column: 2;
  display: flex;
  align-items: center;
  gap: 5px;
}
.app {
  position: relative;
  display: grid;
  place-items: center;
  width: 50px;
  height: 50px;
  border: 1px solid transparent;
  border-radius: 6px;
}
.app svg {
  width: 30px;
  height: 30px;
}
.app.brave {
  border-color: #333;
  background: #2a2a2a;
}
.app.brave::after,
.app.slack::after,
.app.code::after {
  content: "";
  position: absolute;
  bottom: 0;
  width: 8px;
  height: 4px;
  border-radius: 2px;
  background: #999;
}
.app.brave::after {
  width: 20px;
  background: #f4806a;
}
.tray {
  display: flex;
  align-items: center;
  justify-content: flex-end;
  padding: 0 26px 2px 0;
  font-size: 15px;
  line-height: 20px;
}
.tray button svg {
  width: 16px;
  height: 16px;
}
.lang {
  margin: 0 21px 0 25px;
  text-align: center;
}
.status {
  display: flex;
  gap: 10px;
}
.status svg {
  width: 20px;
  height: 20px;
}
.clock {
  margin: 0 11px 0 17px;
  text-align: right;
}
.bell {
  width: 17px;
  height: 20px;
}
</style>
